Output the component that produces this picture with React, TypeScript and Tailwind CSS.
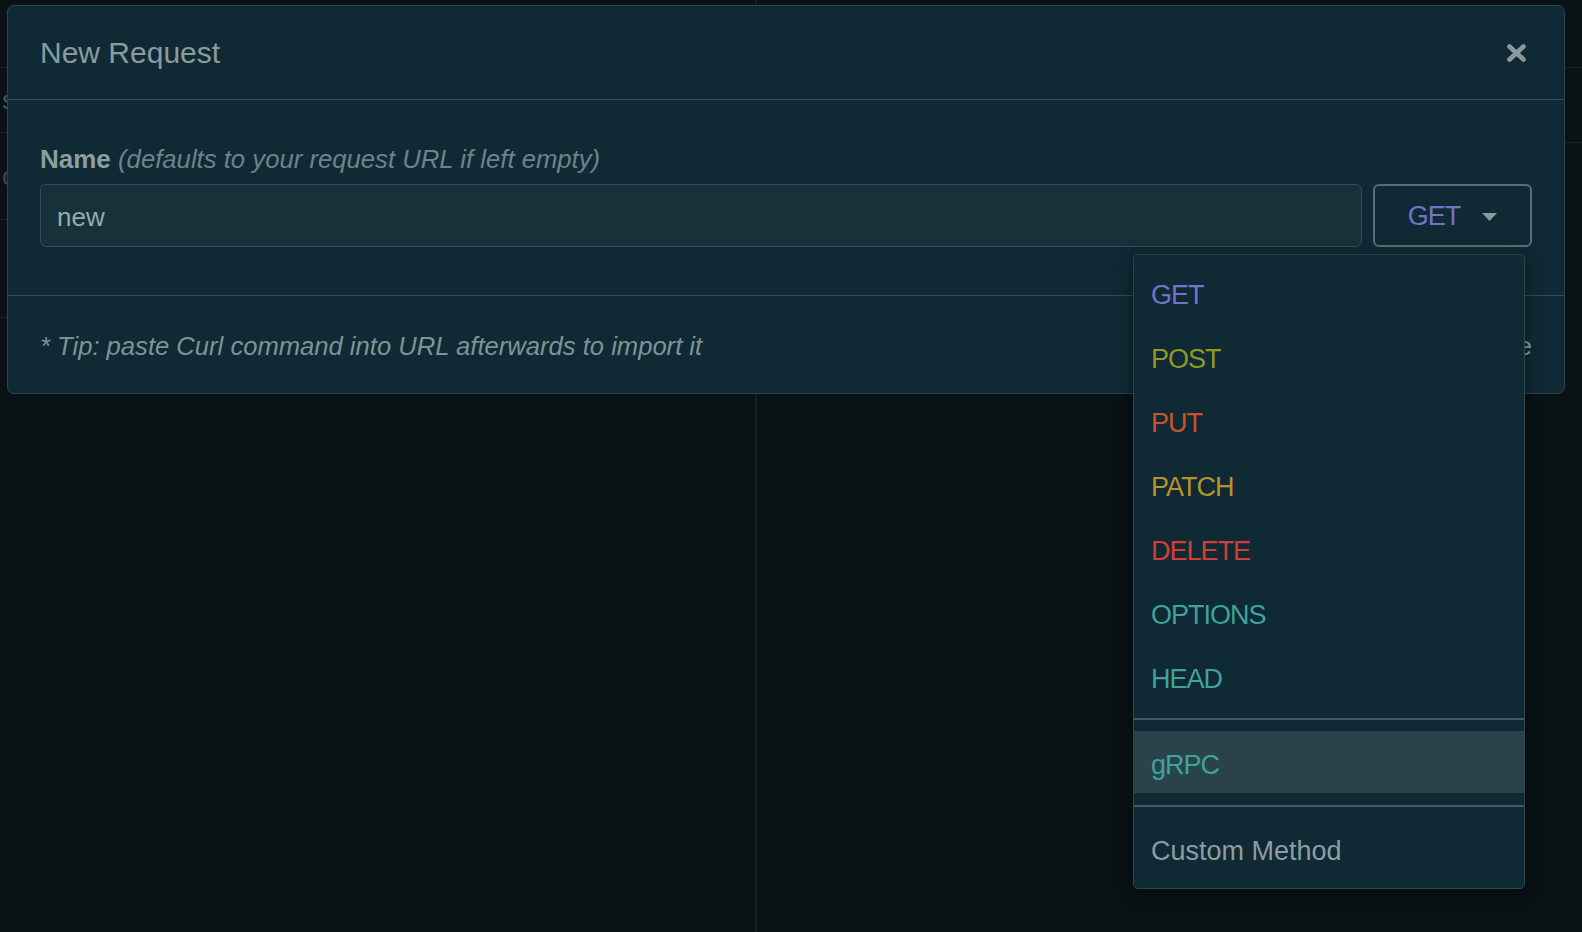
const methods = [
  { name: "GET", color: "text-[#6f75c8]" },
  { name: "POST", color: "text-[#8f9b21]" },
  { name: "PUT", color: "text-[#c8552a]" },
  { name: "PATCH", color: "text-[#b8922a]" },
  { name: "DELETE", color: "text-[#d13e37]" },
  { name: "OPTIONS", color: "text-[#3fa39c]" },
  { name: "HEAD", color: "text-[#3fa39c]" },
];

function CloseIcon() {
  return (
    <svg width="21" height="20" viewBox="0 0 21 20" fill="none" aria-hidden="true">
      <path d="M3.5 3.5 L17.5 16.5 M17.5 3.5 L3.5 16.5" stroke="#8a9a9c" strokeWidth="4.6" strokeLinecap="round" />
    </svg>
  );
}

function Caret() {
  return (
    <svg width="15" height="8" viewBox="0 0 15 8" aria-hidden="true">
      <polygon points="0,0 15,0 7.5,8" fill="#8a9a9c" />
    </svg>
  );
}

function MethodMenu() {
  return (
    <div className="absolute right-[7px] top-[70px] z-10 w-[392px] rounded-[5px] border border-[#2d464e] bg-[#0f2935] pb-[6px] pt-[7px] shadow-[0_4px_18px_rgba(0,0,0,0.45)]">
      {methods.map((m) => (
        <div key={m.name} className={`flex h-[64px] items-center pl-[17px] pt-[2px] text-[27px] leading-[32px] tracking-[-1px] ${m.color}`}>
          {m.name}
        </div>
      ))}
      <div className="mt-[8px] h-[2px] bg-[#48595e]" />
      <div className="mt-[11px] flex h-[62px] items-center bg-[#2a434b] pl-[17px] pt-[5px] text-[27px] leading-[32px] tracking-[-1px] text-[#3fa39c]">
        gRPC
      </div>
      <div className="mt-[12px] h-[2px] bg-[#48595e]" />
      <div className="mt-[11px] flex h-[64px] items-center pl-[17px] pt-[2px] text-[27px] leading-[32px] text-[#8d9ea1]">
        Custom Method
      </div>
    </div>
  );
}

export default function App() {
  return (
    <div className="relative h-[932px] w-[1582px] overflow-hidden bg-[#0a1215] font-['Liberation_Sans',Arial,sans-serif]">
      {/* app behind the dialog */}
      <div className="flex h-full">
        <div className="flex w-[757px] flex-col border-r-2 border-[#161c1f]">
          <div className="h-[68px] border-b border-[#1b2326]" />
          <div className="flex h-[65px] items-center border-b border-[#1b2326] pl-[2px] text-[26px] text-[#4a5558]">s</div>
          <div className="flex h-[87px] items-center border-b border-[#1b2326] pl-[2px] text-[26px] text-[#3e484b]">c</div>
          <div className="h-[98px] border-b border-[#1b2326]" />
        </div>
        <div className="flex flex-1 flex-col">
          <div className="h-[68px] border-b border-[#1b2326]" />
          <div className="h-[75px] border-b border-[#1b2326]" />
        </div>
      </div>

      {/* dialog */}
      <div className="absolute left-[7px] top-[5px] w-[1558px] rounded-[7px] border border-[#2b454d] bg-[#0f2a35]">
        <div className="flex h-[94px] items-center justify-between border-b border-[#334d56] pl-[32px] pr-[37px]">
          <h1 className="text-[30px] leading-[36px] text-[#8a9b9e]">New Request</h1>
          <CloseIcon />
        </div>

        <div className="border-b border-[#334d56] px-[32px] pb-[48px] pt-[44px]">
          <label className="block text-[26px] leading-[30px]">
            <span className="font-bold text-[#8d9ea1]">Name</span>{" "}
            <span className="text-[25.7px] italic text-[#6e8387]">(defaults to your request URL if left empty)</span>
          </label>
          <div className="mt-[10px] flex gap-[11px]">
            <div className="flex h-[63px] flex-1 items-center rounded-[6px] border border-[#354e56] bg-[#16313a] pl-[16px] pt-[3px] text-[26px] text-[#9aa9ab]">
              new
            </div>
            <div className="relative">
              <div className="flex h-[63px] w-[159px] items-center justify-center gap-[22px] rounded-[6px] border-2 border-[#5c6e73] pt-[2px] text-[27px] tracking-[-1px] text-[#6f75c8]">
                <span>GET</span>
                <Caret />
              </div>
              <MethodMenu />
            </div>
          </div>
        </div>

        <div className="flex h-[97px] items-center justify-between px-[32px] pt-[3px]">
          <p className="text-[25.6px] italic text-[#7f9396]">* Tip: paste Curl command into URL afterwards to import it</p>
          <span className="text-[26px] text-[#8d9ea1]">Create</span>
        </div>
      </div>
    </div>
  );
}
